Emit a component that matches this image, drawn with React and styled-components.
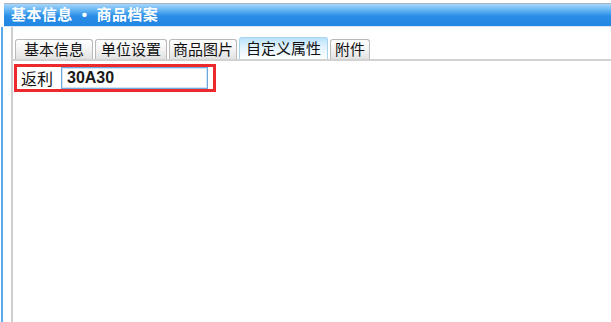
import React from 'react'
import styled, { createGlobalStyle } from 'styled-components'

const Global = createGlobalStyle`
  html, body { margin: 0; padding: 0; background: #fff; }
  body { font-family: "Liberation Sans", "Noto Sans CJK SC", sans-serif; }
`

const Page = styled.div`
  width: 611px;
  height: 322px;
  display: flex;
  flex-direction: column;
  overflow: hidden;
  background: #fff;
`

const TitleBar = styled.div`
  margin: 3px 0 0 4px;
  height: 22px;
  border-top: 1px solid #a9b4bf;
  border-bottom: 1px solid #d7e6f2;
  background: linear-gradient(#a8d6fb 0%, #5fb2f3 30%, #2a8de6 55%, #2287e4 100%);
  color: #fff;
  font-weight: bold;
  font-size: 15px;
  line-height: 22px;
  padding-left: 7px;
  letter-spacing: 0.4px;
  white-space: pre;
`

const Body = styled.div`
  flex: 1;
  display: flex;
  margin-left: 1px;
  border-left: 2px solid #5aa9ef;
`

const Panel = styled.div`
  flex: 1;
  margin-left: 8px;
  border-left: 2px solid #cfcfcf;
  padding-top: 10px;
`

const TabBar = styled.div`
  display: flex;
  align-items: flex-end;
  gap: 2px;
  padding-left: 2px;
  height: 22px;
  border-bottom: 2px solid #d2d2d2;
`

const Tab = styled.div`
  height: ${p => (p.active ? 22 : 20)}px;
  box-sizing: border-box;
  padding: 0 ${p => p.pad}px;
  border: 1px solid ${p => (p.active ? '#a8d3ee' : '#b9b9b9')};
  border-bottom: none;
  border-radius: 3px 3px 0 0;
  background: ${p =>
    p.active
      ? 'linear-gradient(#b8e2fb 0%, #dff1fc 40%, #ffffff 100%)'
      : 'linear-gradient(#ffffff 0%, #f3f3f3 50%, #e2e2e2 100%)'};
  font-size: 15px;
  line-height: ${p => (p.active ? 22 : 20)}px;
  color: #111;
  white-space: nowrap;
`

const Field = styled.div`
  display: flex;
  align-items: center;
  width: 202px;
  height: 28px;
  box-sizing: border-box;
  margin: 3px 0 0 1px;
  border: 3px solid #ec2a2e;
  padding-left: 4px;
`

const Label = styled.span`
  font-size: 16px;
  color: #111;
  width: 40px;
`

const Input = styled.div`
  width: 147px;
  height: 22px;
  box-sizing: border-box;
  border: 1px solid #6fa9dc;
  box-shadow: inset 0 0 0 1px #cfe4f6;
  font-size: 16px;
  font-weight: bold;
  color: #1a1a1a;
  line-height: 20px;
  padding-left: 5px;
`

const tabs = [
  { name: '基本信息', pad: 8 },
  { name: '单位设置', pad: 5 },
  { name: '商品图片', pad: 3 },
  { name: '自定义属性', pad: 6, active: true },
  { name: '附件', pad: 4 },
]

export default function App() {
  return (
    <Page>
      <Global />
      <TitleBar>{'基本信息  •  商品档案'}</TitleBar>
      <Body>
        <Panel>
          <TabBar>
            {tabs.map(t => (
              <Tab key={t.name} active={t.active} pad={t.pad}>
                {t.name}
              </Tab>
            ))}
          </TabBar>
          <Field>
            <Label>返利</Label>
            <Input>30A30</Input>
          </Field>
        </Panel>
      </Body>
    </Page>
  )
}
